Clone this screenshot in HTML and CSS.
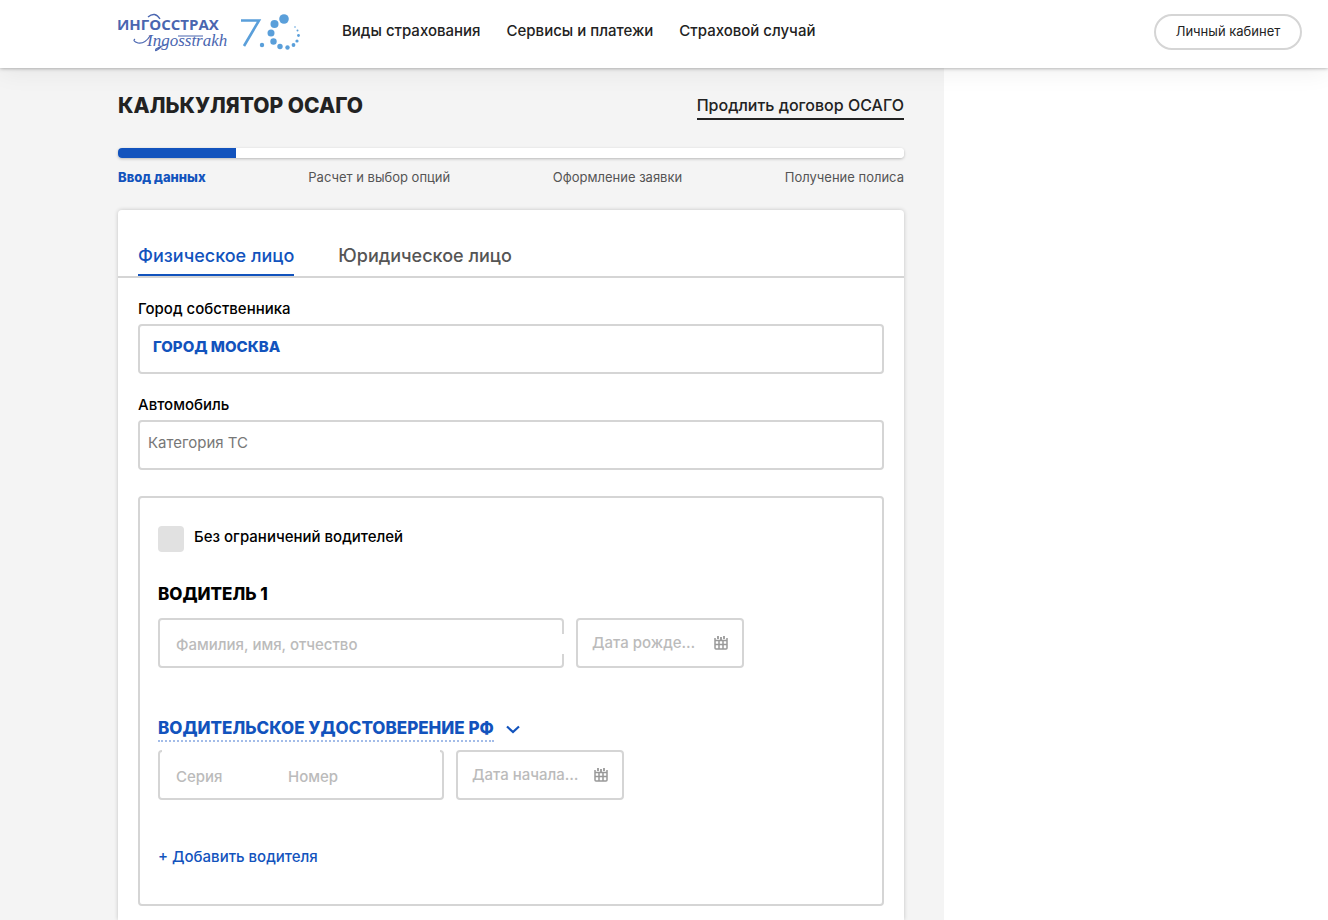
FILE: index.html
```html
<!DOCTYPE html>
<html lang="ru">
<head>
<meta charset="utf-8">
<title>Калькулятор ОСАГО</title>
<link rel="stylesheet" href="styles.css">
</head>
<body>
<header class="header">
  <a class="logo" href="#" aria-label="Ингосстрах">
    <svg width="184" height="40" viewBox="0 0 184 40">
      <text class="logo-name" x="0" y="18">ИНГОССТРАХ</text>
      <path d="M31 5Q38-1 43 7" fill="none" stroke="#4a66b0" stroke-width="1.4"/>
      <path d="M33 24Q28 32 21 31Q15 29 18 27M61 24H86M44 35Q37 41 39 37Q42 35 50 32" fill="none" stroke="#4a66b0" stroke-width="1.2"/>
      <text class="logo-script" x="30" y="34">Ingosstrakh</text>
      <path d="M124 8.500H142L127 34" fill="none" stroke="#5a9fda" stroke-width="2.600"/>
      <g fill="#5a9fda">
        <circle cx="145" cy="33" r="2.200"/><circle cx="167" cy="7" r="4.800"/><circle cx="157.500" cy="12" r="4"/>
        <circle cx="154" cy="21" r="3.500"/><circle cx="156.500" cy="29.500" r="3.200"/><circle cx="163" cy="34.500" r="2.700"/>
        <circle cx="170.500" cy="35.500" r="2.200"/><circle cx="176.500" cy="33" r="1.900"/><circle cx="180" cy="29" r="1.600"/>
        <circle cx="181.500" cy="23.500" r="1.400"/><circle cx="180.500" cy="18.500" r="1"/><circle cx="178" cy="15" r=".8"/>
      </g>
    </svg>
  </a>
  <nav class="nav">
    <a href="#">Виды страхования</a>
    <a href="#">Сервисы и платежи</a>
    <a href="#">Страховой случай</a>
  </nav>
  <a class="account" href="#">Личный кабинет</a>
</header>

<div class="page">
  <main class="main">
    <div class="title-row">
      <h1 class="title">КАЛЬКУЛЯТОР ОСАГО</h1>
      <a class="renew" href="#">Продлить договор ОСАГО</a>
    </div>
    <progress class="progress" value="15" max="100" aria-label="Ввод данных"></progress>
    <ol class="steps">
      <li class="step-current">Ввод данных</li>
      <li>Расчет и выбор опций</li>
      <li>Оформление заявки</li>
      <li>Получение полиса</li>
    </ol>

    <form class="card">
      <div class="tabs" role="tablist">
        <button class="tab tab-active" type="button" role="tab" aria-selected="true">Физическое лицо</button>
        <button class="tab" type="button" role="tab" aria-selected="false">Юридическое лицо</button>
      </div>
      <div class="fields">
        <label class="label" for="city">Город собственника</label>
        <input class="input input-city" id="city" type="text" value="ГОРОД МОСКВА">
        <label class="label" for="car">Автомобиль</label>
        <input class="input input-car" id="car" type="text" placeholder="Категория ТС">

        <section class="drivers">
          <label class="check"><input class="check-box" type="checkbox"><span>Без ограничений водителей</span></label>
          <h2 class="driver-title">ВОДИТЕЛЬ 1</h2>
          <div class="row">
            <div class="box box-name">
              <input class="bare" type="text" placeholder="Фамилия, имя, отчество" aria-label="Фамилия, имя, отчество">
            </div>
            <div class="box box-date">
              <input class="bare" type="text" placeholder="Дата рождения" aria-label="Дата рождения">
              <svg class="calendar" width="14" height="15" viewBox="0 0 14 15"><path d="M1 3V13Q1 14 2 14H12Q13 14 13 13V3M1 5.500H13M1 9.500H13M5 5.500V14M9 5.500V14" fill="none" stroke="#999" stroke-width="1.500"/><path d="M4 1V4M10 1V4M7 2V5" stroke="#999" stroke-width="1.800"/></svg>
            </div>
          </div>
          <button class="license" type="button">
            <span class="license-text">ВОДИТЕЛЬСКОЕ УДОСТОВЕРЕНИЕ РФ</span>
            <svg width="14" height="9" viewBox="0 0 14 9"><path d="M1 1.500L7 7L13 1.500" fill="none" stroke="#1253bd" stroke-width="2.200"/></svg>
          </button>
          <div class="row">
            <div class="box box-license">
              <input class="bare bare-series" type="text" placeholder="Серия" aria-label="Серия">
              <input class="bare" type="text" placeholder="Номер" aria-label="Номер">
            </div>
            <div class="box box-date">
              <input class="bare" type="text" placeholder="Дата начала стажа" aria-label="Дата начала стажа">
              <svg class="calendar" width="14" height="15" viewBox="0 0 14 15"><path d="M1 3V13Q1 14 2 14H12Q13 14 13 13V3M1 5.500H13M1 9.500H13M5 5.500V14M9 5.500V14" fill="none" stroke="#999" stroke-width="1.500"/><path d="M4 1V4M10 1V4M7 2V5" stroke="#999" stroke-width="1.800"/></svg>
            </div>
          </div>
          <button class="add" type="button">+ Добавить водителя</button>
        </section>
      </div>
    </form>
  </main>
</div>
</body>
</html>
```
FILE: styles.css
```css
* { box-sizing: border-box; }

body {
  margin: 0;
  min-height: 100vh;
  display: flex;
  flex-direction: column;
  background: #fff;
  color: #222;
  font-family: Inter, "Open Sans", sans-serif;
  font-size: 15px;
  line-height: 20px;
}

a { color: inherit; text-decoration: none; }
button { padding: 0; border: 0; background: none; font: inherit; cursor: pointer; }

.header {
  position: relative;
  z-index: 1;
  display: flex;
  align-items: center;
  min-height: 68px;
  padding: 0 26px 4px 117px;
  background: #fff;
  box-shadow: 0 0 4px rgba(0, 0, 0, .4), 0 5px 24px rgba(0, 0, 0, .06);
}
.logo { display: block; height: 40px; margin-right: 41px; }
.logo-name { font: 700 15px "Open Sans", sans-serif; fill: #4a66b0; }
.logo-script { font: italic 17px "Liberation Serif", serif; fill: #4a66b0; }
.nav { display: flex; gap: 26px; padding-bottom: 2px; font-weight: 500; white-space: nowrap; }
.account {
  display: flex;
  align-items: center;
  justify-content: center;
  min-width: 148px;
  height: 36px;
  margin-left: auto;
  padding: 0 18px 2px;
  border: 2px solid #d5d5d5;
  border-radius: 18px;
  font-size: 13px;
}

.page {
  flex: 1;
  display: grid;
  grid-template-columns: minmax(0, 59fr) 24fr;
}
.main {
  display: flex;
  flex-direction: column;
  padding: 24px 40px 0 118px;
  background: #f4f4f4;
}
.title-row { display: flex; justify-content: space-between; align-items: stretch; }
.title { margin: 0; font-size: 21px; font-weight: 800; line-height: 28px; }
.renew { border-bottom: 2px solid #222; font-size: 16px; font-weight: 500; line-height: 26px; }

.progress {
  appearance: none;
  display: block;
  width: 100%;
  height: 10px;
  margin-top: 28px;
  border: 0;
  border-radius: 4px;
  overflow: hidden;
  background: #fff;
  box-shadow: 0 1px 3px rgba(0, 0, 0, .25);
}
.progress::-webkit-progress-bar { background: #fff; }
.progress::-webkit-progress-value { background: #1253bd; }

.steps {
  display: flex;
  justify-content: space-between;
  margin: 9px 0 23px;
  padding: 0;
  list-style: none;
  color: #555;
  font-size: 13px;
}
.step-current { color: #1253bd; font-weight: 800; }

.card {
  flex: 1;
  padding-bottom: 14px;
  border-radius: 4px 4px 0 0;
  background: #fff;
  box-shadow: 0 0 4px rgba(0, 0, 0, .2);
}
.tabs { display: flex; gap: 44px; padding: 28px 20px 0; border-bottom: 2px solid #d5d5d5; }
.tab {
  padding: 7px 0;
  border-bottom: 2px solid transparent;
  color: #555;
  font-size: 18px;
  font-weight: 500;
  line-height: 22px;
}
.tab-active { border-color: #1253bd; color: #1253bd; }

.fields { padding: 21px 20px 0; }
.label { display: block; margin-bottom: 5px; color: #000; font-weight: 500; }
.input {
  display: block;
  width: 100%;
  height: 50px;
  margin: 0 0 21px;
  border: 2px solid #d5d5d5;
  border-radius: 4px;
  background: #fff;
  font-family: inherit;
  font-size: 15px;
}
.input-city { padding: 0 13px 6px; color: #1253bd; font-weight: 800; }
.input-car { padding: 0 8px 6px; margin-bottom: 26px; }
.input-car::placeholder { color: #777; }

.drivers {
  padding: 28px 18px 37px;
  border: 2px solid #d5d5d5;
  border-radius: 4px;
}
.check { display: flex; gap: 10px; color: #000; font-weight: 500; line-height: 22px; }
.check-box {
  appearance: none;
  flex: none;
  width: 26px;
  height: 26px;
  margin: 0;
  border-radius: 4px;
  background: #e1e1e1;
}
.driver-title { margin: 30px 0 12px; color: #000; font-size: 17px; font-weight: 800; line-height: 24px; }

.row { display: flex; gap: 12px; }
.box {
  position: relative;
  display: flex;
  align-items: center;
  min-width: 0;
  height: 50px;
  border: 2px solid #d5d5d5;
  border-radius: 4px;
}
.box-name { flex: 0 1 406px; padding: 2px 16px 0; }
.box-date { flex: 0 1 168px; gap: 12px; padding: 0 14px 2px; }
.box-license { flex: 0 1 286px; gap: 12px; padding: 2px 16px 0; }
.box-name::after, .box-license::after { content: ""; position: absolute; background: #fff; }
.box-name::after { top: 14px; right: -2px; width: 2px; height: 20px; }
.box-license::after { top: -2px; left: 2px; right: 2px; height: 2px; }
.bare {
  flex: 1;
  min-width: 0;
  padding: 0;
  border: 0;
  outline: 0;
  background: none;
  font-family: inherit;
  font-size: 15px;
  font-weight: 500;
  text-overflow: ellipsis;
}
.bare::placeholder { color: #bbb; }
.bare-series { flex: 0 1 100px; }
.calendar { flex: none; }

.license {
  display: flex;
  align-items: center;
  gap: 12px;
  margin: 48px 0 8px;
  color: #1253bd;
  font-size: 17px;
  font-weight: 800;
  line-height: 24px;
}
.license-text { border-bottom: 2px dotted #a3bce8; }
.add { display: block; margin-top: 47px; color: #1253bd; font-weight: 500; line-height: 20px; }
```
